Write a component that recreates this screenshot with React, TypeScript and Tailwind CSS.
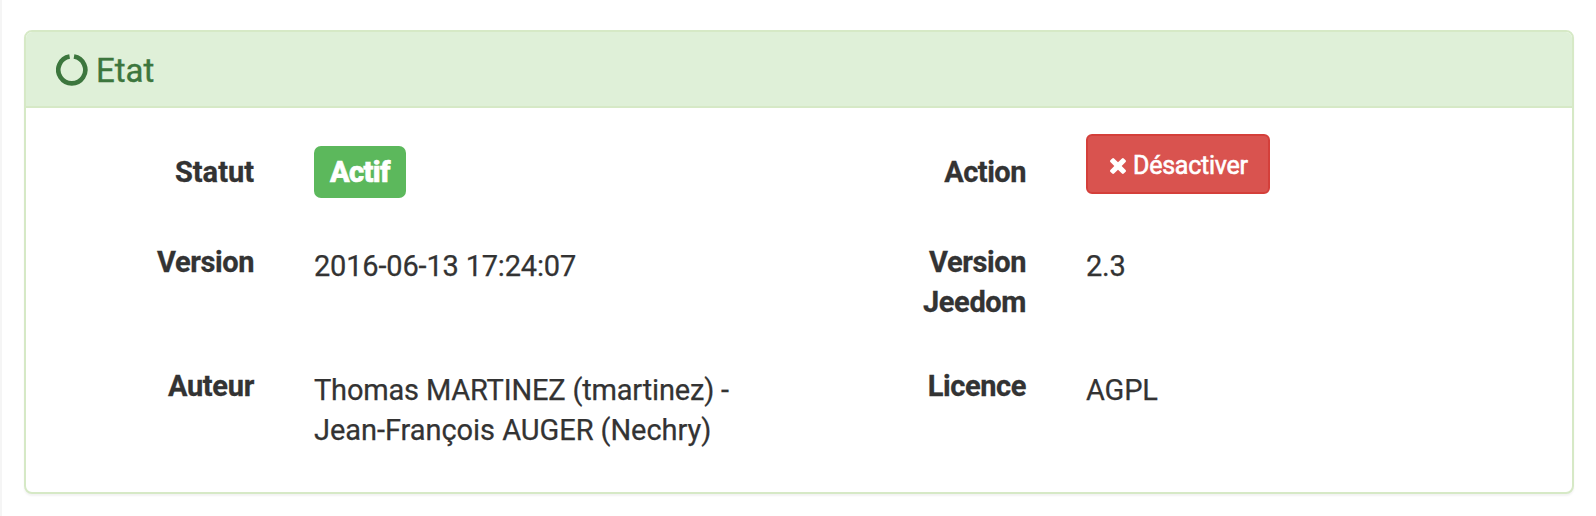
import React from 'react';

const label = 'mr-[60px] w-[228px] shrink-0 text-right text-[29px] leading-[40px] font-bold [-webkit-text-stroke:0.3px_currentColor]';
const value = 'mt-[4px] text-[29px] leading-[40px] tracking-[-0.18px] [-webkit-text-stroke:0.25px_currentColor]';

function RingIcon() {
  return (
    <svg className="mt-px" width="32" height="32" viewBox="0 0 32 32" fill="none" stroke="currentColor" strokeWidth="4.6">
      <path d="M18 2.6A13.5 13.5 0 1 1 13.6 2.6" />
    </svg>
  );
}

function CrossIcon() {
  return (
    <svg className="mt-[4px]" width="16" height="16" viewBox="302 366 1188 1188" fill="currentColor">
      <path d="M1490 1322q0 40-28 68l-136 136q-28 28-68 28t-68-28l-294-294-294 294q-28 28-68 28t-68-28l-136-136q-28-28-28-68t28-68l294-294-294-294q-28-28-28-68t28-68l136-136q28-28 68-28t68 28l294 294 294-294q28-28 68-28t68 28l136 136q28 28 28 68t-28 68l-294 294 294 294q28 28 28 68z" />
    </svg>
  );
}

export default function App() {
  return (
    <div className="h-[516px] w-full overflow-hidden border-l-2 border-[#f5f5f5] bg-white pt-[30px] pl-[22px] font-['Roboto',sans-serif] text-[#333]">
      <section className="flex h-[464px] w-[1550px] flex-col rounded-[8px] border-2 border-[#d6e9c6] bg-white shadow-[0_2px_2px_rgba(0,0,0,0.05)]">
        <header className="flex h-[76px] items-center gap-[8px] rounded-t-[6px] border-b-2 border-[#d6e9c6] bg-[#dff0d8] pl-[30px] text-[#3c763d]">
          <RingIcon />
          <h3 className="mt-[3px] text-[33px] leading-[36px] [-webkit-text-stroke:0.4px_currentColor]">Etat</h3>
        </header>
        <div className="grid grid-cols-[772px_1fr]">
          <div className="flex h-[124px] items-start pt-[44px]">
            <div className={`${label} tracking-normal`}>Statut</div>
            <div className="-mt-[6px] flex h-[52px] w-[92px] items-center justify-center rounded-[7px] bg-[#5cb85c] pt-[2px] text-[29px] font-extrabold tracking-[-0.6px] text-white [-webkit-text-stroke:0.7px_currentColor]">Actif</div>
          </div>
          <div className="flex h-[124px] items-start pt-[44px]">
            <div className={`${label} tracking-[-0.5px]`}>Action</div>
            <button className="-mt-[18px] flex h-[60px] w-[184px] items-center justify-start gap-[7px] rounded-[6px] border-2 border-[#d43f3a] bg-[#d9534f] pl-[22px] text-[25px] leading-[36px] tracking-[-0.25px] text-white">
              <CrossIcon />
              <span className="mt-[4px] [-webkit-text-stroke:0.6px_currentColor]">Désactiver</span>
            </button>
          </div>
          <div className="flex h-[124px] items-start pt-[10px]">
            <div className={`${label} tracking-[-0.4px]`}>Version</div>
            <div className={value}>2016-06-13 17:24:07</div>
          </div>
          <div className="flex h-[124px] items-start pt-[10px]">
            <div className={`${label} tracking-[-0.4px]`}>Version<br />Jeedom</div>
            <div className={value}>2.3</div>
          </div>
          <div className="flex items-start pt-[10px]">
            <div className={`${label} tracking-[-0.3px]`}>Auteur</div>
            <div className={value}>
              Thomas MARTINEZ (tmartinez) -<br />
              <span className="tracking-[-0.05px]">Jean-François AUGER (Nechry)</span>
            </div>
          </div>
          <div className="flex items-start pt-[10px]">
            <div className={`${label} tracking-[-0.4px]`}>Licence</div>
            <div className={value}>AGPL</div>
          </div>
        </div>
      </section>
    </div>
  );
}
